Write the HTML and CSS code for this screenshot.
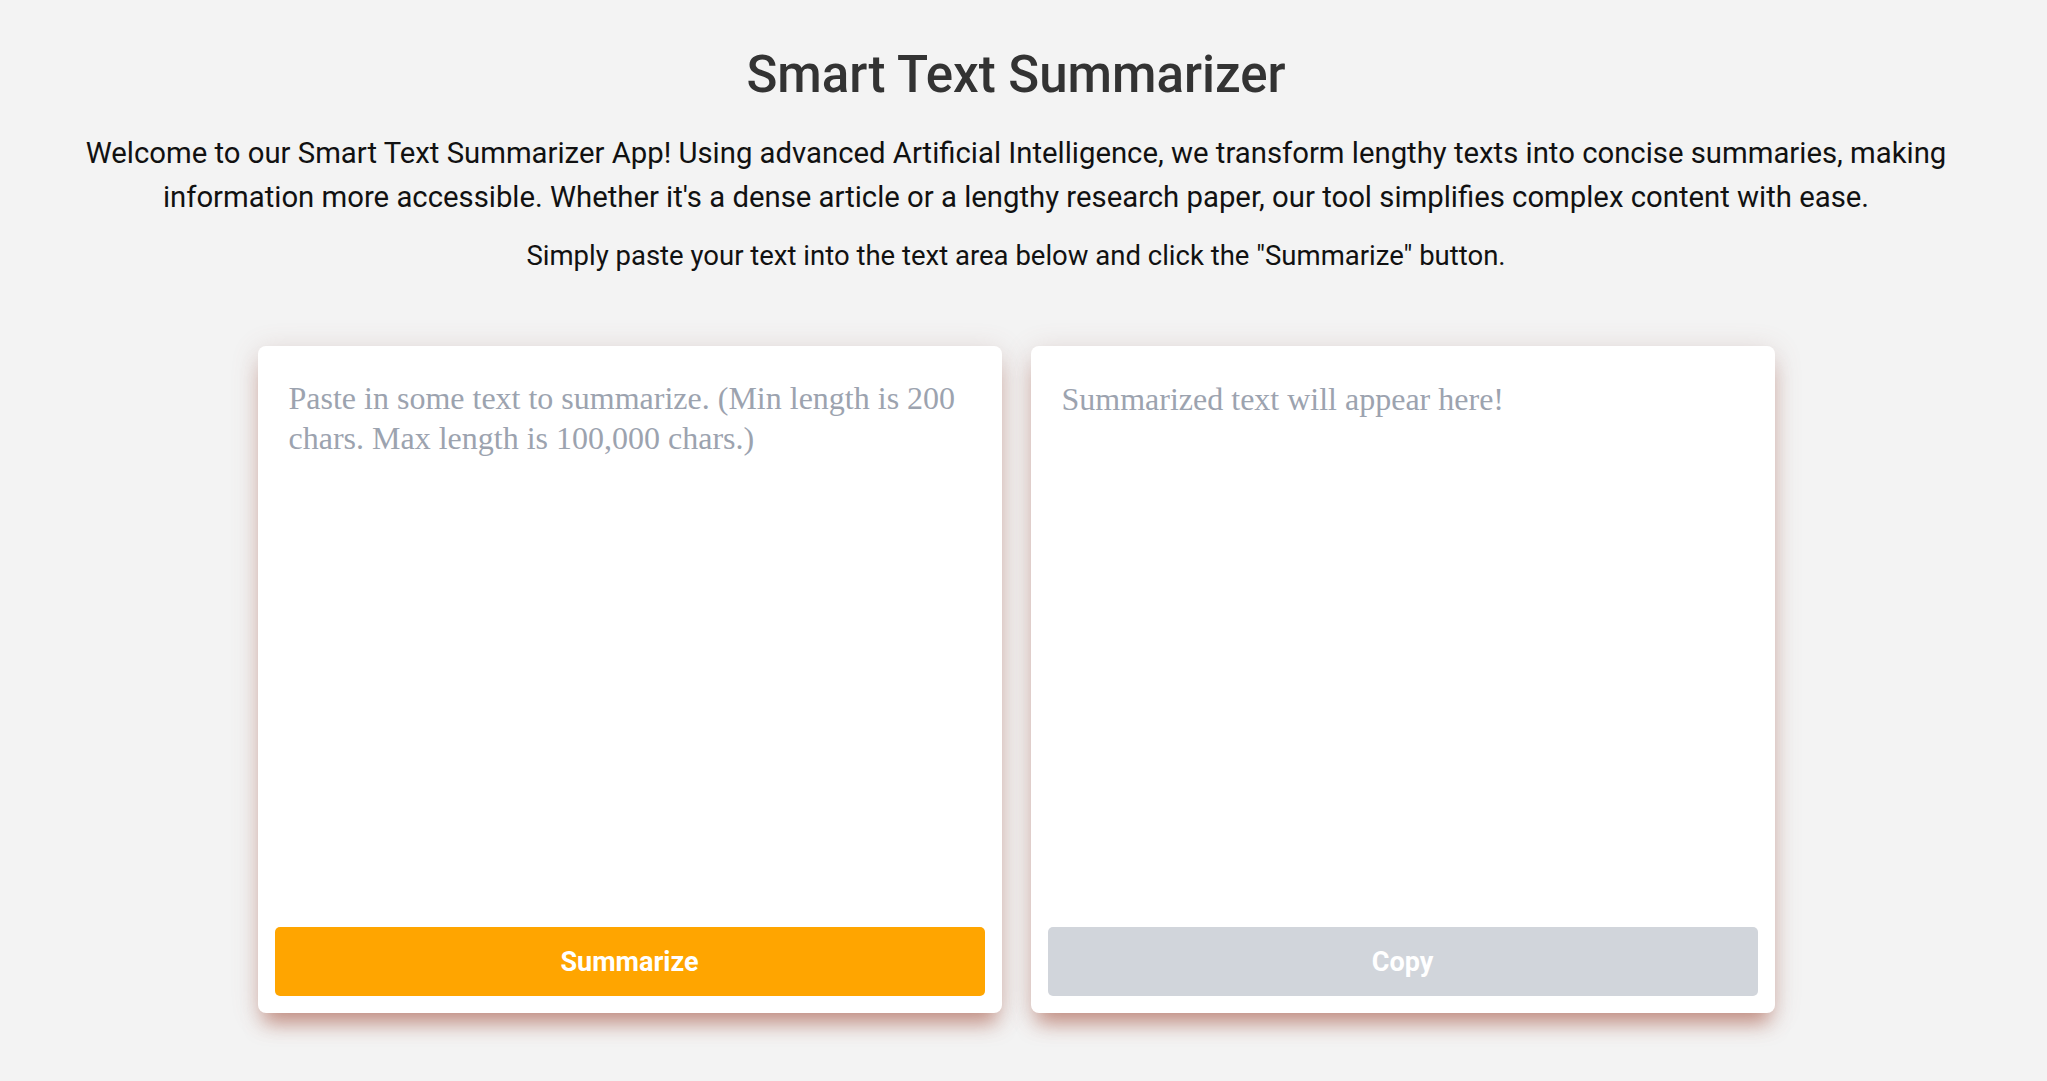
FILE: index.html
```html
<!DOCTYPE html>
<html lang="en">
<head>
<meta charset="utf-8">
<title>Smart Text Summarizer</title>
<link rel="stylesheet" href="styles.css">
</head>
<body>
<main class="page">
  <header class="intro">
    <h1 class="title">Smart Text Summarizer</h1>
    <p class="lead">Welcome to our Smart Text Summarizer App! Using advanced Artificial Intelligence, we transform lengthy texts into concise summaries, making information more accessible. Whether it's a dense article or a lengthy research paper, our tool simplifies complex content with ease.</p>
    <p class="hint">Simply paste your text into the text area below and click the "Summarize" button.</p>
  </header>
  <section class="panels">
    <div class="card">
      <textarea class="input" placeholder="Paste in some text to summarize. (Min length is 200 chars. Max length is 100,000 chars.)"></textarea>
      <button class="btn btn-primary" type="button">Summarize</button>
    </div>
    <div class="card">
      <div class="output">Summarized text will appear here!</div>
      <button class="btn btn-disabled" type="button">Copy</button>
    </div>
  </section>
</main>
</body>
</html>
```

FILE: styles.css
```css
* { box-sizing: border-box; }
html, body { margin: 0; padding: 0; }
body {
  background: #f3f3f3;
  font-family: Roboto, "Liberation Sans", Arial, sans-serif;
  color: #111;
}
.page {
  width: calc(100% - 15px);
  padding-top: 44px;
}
.intro {
  text-align: center;
  padding: 0 40px;
}
.title {
  margin: 0;
  font-size: 51px;
  line-height: 62px;
  font-weight: 500;
  color: #333;
}
.lead {
  margin: 25px 0 0;
  font-size: 29.3px;
  line-height: 44px;
  color: #111;
}
.hint {
  margin: 15px 0 0;
  font-size: 27.5px;
  line-height: 44px;
  color: #111;
}
.panels {
  display: flex;
  justify-content: center;
  gap: 29px;
  margin-top: 68px;
  padding-bottom: 60px;
}
.card {
  width: 744px;
  height: 667px;
  background: #fff;
  border-radius: 8px;
  padding: 17px;
  display: flex;
  flex-direction: column;
  box-shadow: 0 16px 20px -6px rgba(165, 80, 60, 0.55), 0 4px 28px rgba(150, 90, 80, 0.2);
}
.input, .output {
  flex: 1;
  border: none;
  outline: none;
  resize: none;
  background: transparent;
  font-family: "Liberation Serif", "Times New Roman", serif;
  font-size: 32px;
  line-height: 40px;
  padding: 15px 14px;
  margin: 0;
  color: #9ca3af;
}
.input::placeholder { color: #9ca3af; opacity: 1; }
.output { padding-top: 16px; }
.btn {
  height: 69px;
  border: none;
  border-radius: 5px;
  font-family: Roboto, "Liberation Sans", Arial, sans-serif;
  font-weight: 700;
  font-size: 27px;
  color: #fff;
  width: 100%;
  margin-top: 10px;
}
.btn-primary { background: #ffa500; }
.btn-disabled { background: #d1d5db; }
```
